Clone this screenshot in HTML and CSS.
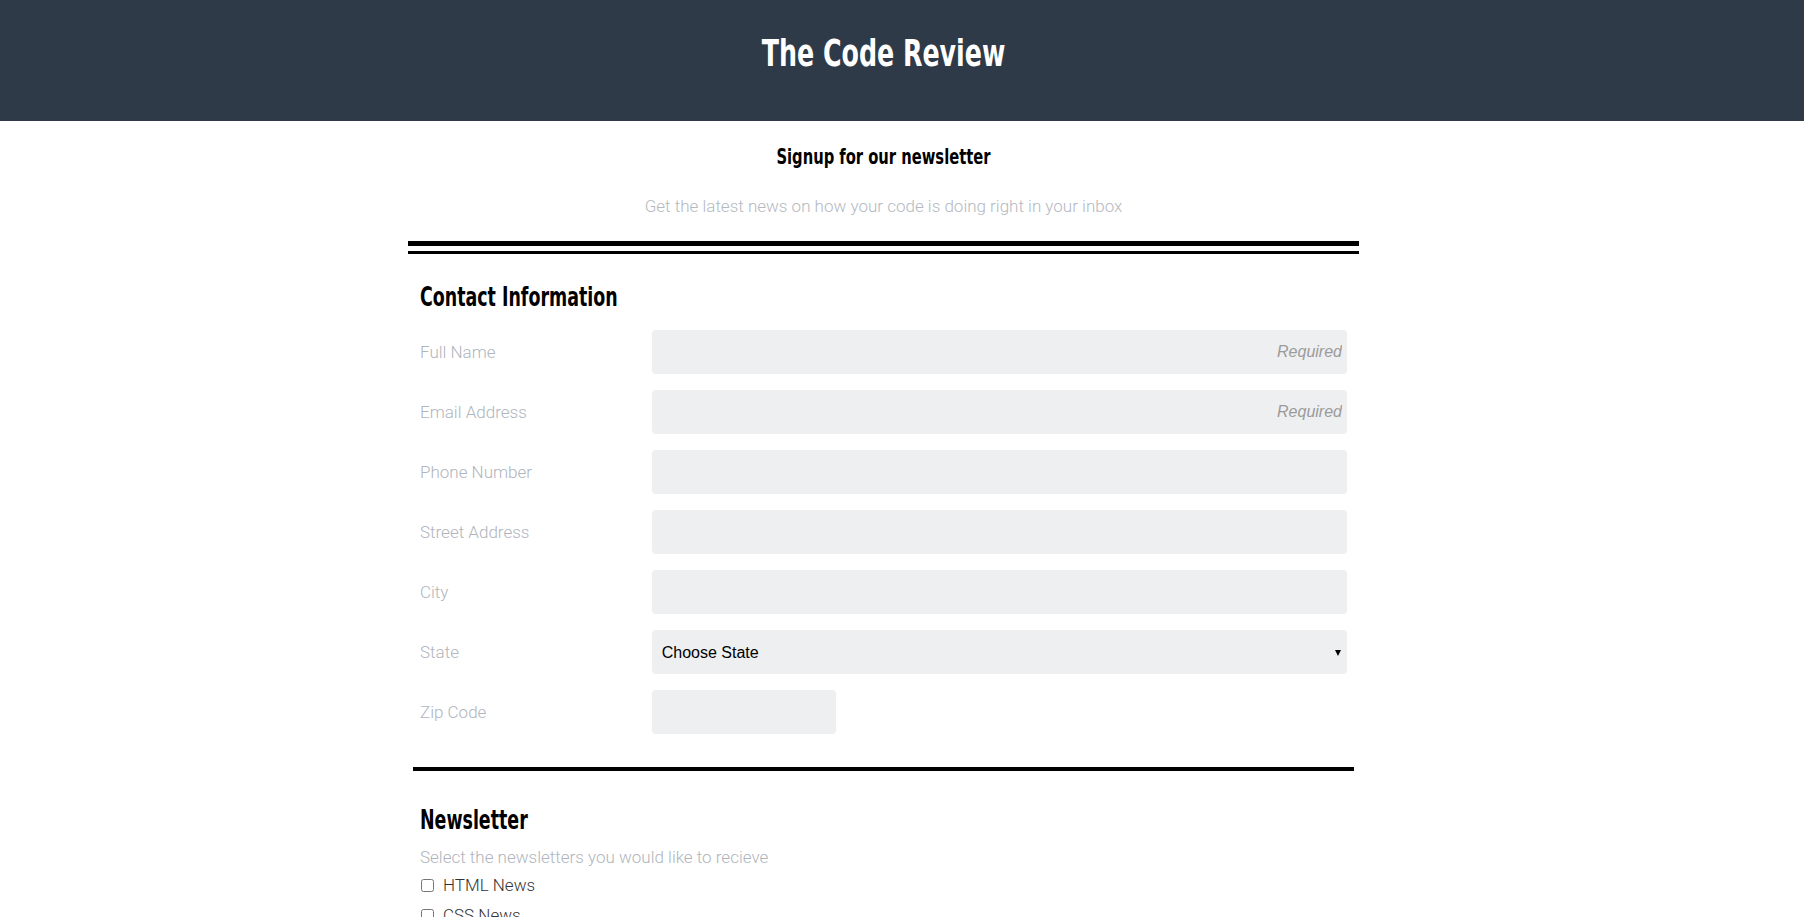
FILE: index.html
```html
<!DOCTYPE html>
<html lang="en">
<head>
<meta charset="utf-8">
<title>The Code Review</title>
<link rel="stylesheet" href="styles.css">
</head>
<body>
<header class="site-header">
  <div class="wrap">
    <h1 class="site-title">The Code Review</h1>
  </div>
</header>
<main class="wrap">
  <div class="page">
    <h2 class="signup-title">Signup for our newsletter</h2>
    <p class="signup-sub">Get the latest news on how your code is doing right in your inbox</p>
    <div class="double-rule"></div>
    <form class="form">
      <section class="section">
        <h3 class="section-title">Contact Information</h3>
        <div class="row">
          <label class="label" for="name">Full Name</label>
          <input class="field" id="name" type="text" placeholder="Required">
        </div>
        <div class="row">
          <label class="label" for="email">Email Address</label>
          <input class="field" id="email" type="email" placeholder="Required">
        </div>
        <div class="row">
          <label class="label" for="phone">Phone Number</label>
          <input class="field" id="phone" type="tel">
        </div>
        <div class="row">
          <label class="label" for="street">Street Address</label>
          <input class="field" id="street" type="text">
        </div>
        <div class="row">
          <label class="label" for="city">City</label>
          <input class="field" id="city" type="text">
        </div>
        <div class="row">
          <label class="label" for="state">State</label>
          <div class="select-wrap">
            <select class="field select" id="state">
              <option>Choose State</option>
              <option>Alabama</option>
              <option>Alaska</option>
              <option>Arizona</option>
            </select>
          </div>
        </div>
        <div class="row">
          <label class="label" for="zip">Zip Code</label>
          <input class="field field-zip" id="zip" type="text">
        </div>
      </section>
      <div class="rule"></div>
      <section class="section">
        <h3 class="section-title news-title">Newsletter</h3>
        <p class="hint">Select the newsletters you would like to recieve</p>
        <label class="check"><input type="checkbox" class="box"> <span>HTML News</span></label>
        <label class="check"><input type="checkbox" class="box"> <span>CSS News</span></label>
        <label class="check"><input type="checkbox" class="box"> <span>Javascript News</span></label>
      </section>
    </form>
  </div>
</main>
</body>
</html>
```
FILE: styles.css
```css
html, body {
  margin: 0;
  padding: 0;
}
body {
  background: #ffffff;
  font-family: Roboto, "Noto Sans", sans-serif;
  font-weight: 300;
  color: #333;
}
.wrap {
  padding-right: 37px;
}
.site-header {
  background: #2e3a47;
  height: 121px;
  box-sizing: border-box;
  padding-top: 34px;
}
.site-title,
.signup-title,
.section-title {
  font-family: "DejaVu Sans Condensed", "DejaVu Sans", sans-serif;
  font-weight: 700;
  line-height: 1;
}
.site-title {
  margin: 0;
  text-align: center;
  color: #ffffff;
  font-size: 38px;
  transform: scaleX(0.74);
}
.page {
  width: 951px;
  margin: 0 auto;
}
.signup-title {
  margin: 26px 0 0;
  text-align: center;
  font-size: 21px;
  color: #000;
  transform: scaleX(0.78);
}
.signup-sub {
  margin: 28px 0 0;
  text-align: center;
  font-size: 17px;
  line-height: 20px;
  color: #b4b9c1;
}
.double-rule {
  margin-top: 25px;
  height: 5px;
  border-top: 5px solid #000;
  border-bottom: 3px solid #000;
}
.form {
  padding: 0 12px;
}
.section-title {
  margin: 30px 0 0;
  font-size: 26px;
  color: #000;
  transform: scaleX(0.745);
  transform-origin: left center;
}
.section-title + .row {
  margin-top: 20px;
}
.row {
  display: grid;
  grid-template-columns: 25% 75%;
  align-items: center;
  margin-bottom: 16px;
}
.label {
  font-size: 17px;
  line-height: 20px;
  color: #b0b5bd;
}
.field {
  box-sizing: border-box;
  height: 44px;
  width: 100%;
  border: none;
  border-radius: 4px;
  background: #eeeff1;
  padding: 0 5px 0 10px;
  font-family: "Liberation Sans", Arial, sans-serif;
  font-size: 16px;
  color: #000;
  text-align: right;
  outline: none;
}
.field::placeholder {
  color: #9b9b9b;
  font-style: italic;
}
.field-zip {
  width: 184px;
}
.select-wrap {
  position: relative;
}
.select {
  appearance: none;
  -webkit-appearance: none;
  text-align: left;
}
.select-wrap::after {
  content: "";
  position: absolute;
  right: 6px;
  top: 20px;
  border-left: 3.5px solid transparent;
  border-right: 3.5px solid transparent;
  border-top: 6px solid #000;
  pointer-events: none;
}
.rule {
  margin: 33px -7px 0;
  height: 4px;
  background: #000;
}
.news-title {
  margin-top: 36px;
}
.hint {
  margin: 14px 0 0;
  font-size: 17px;
  line-height: 20px;
  color: #b0b5bd;
}
.check {
  display: flex;
  align-items: center;
  margin-top: 8px;
  font-size: 17px;
  line-height: 20px;
  color: #333;
}
.check + .check {
  margin-top: 10px;
}
.box {
  margin: 0 9px 0 1px;
  width: 13px;
  height: 13px;
}
```
